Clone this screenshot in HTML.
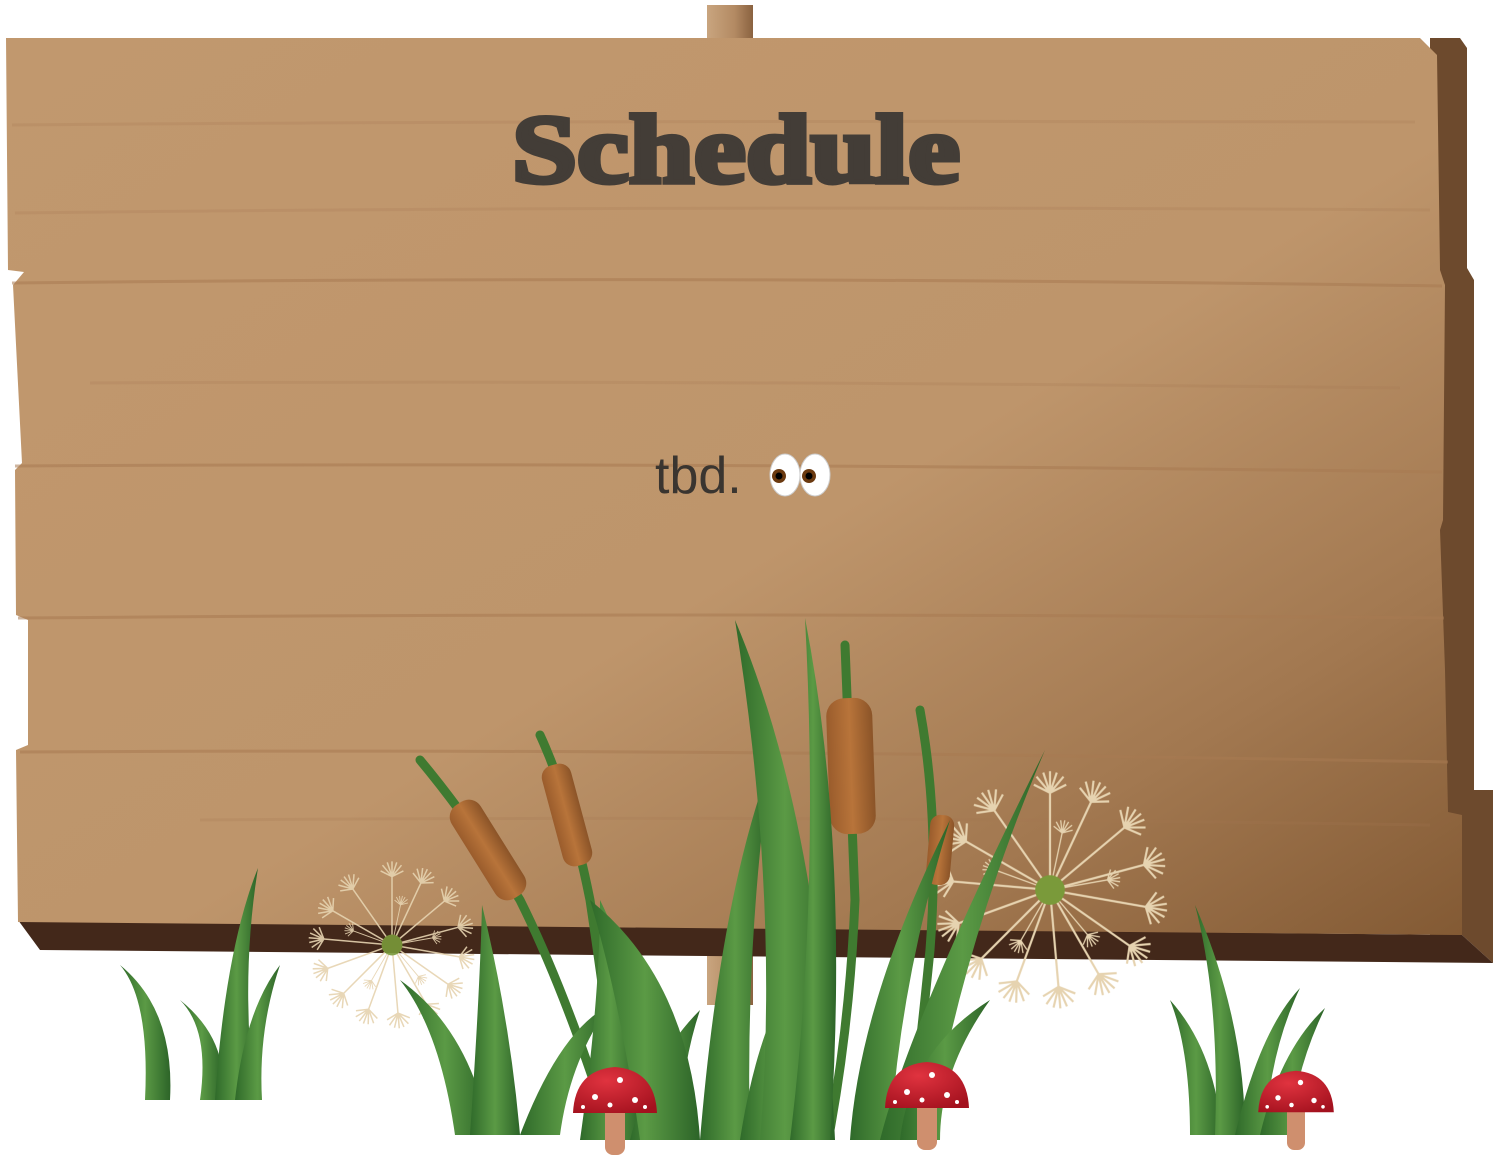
<!DOCTYPE html>
<html><head><meta charset="utf-8"><style>
html,body{margin:0;padding:0;background:#fff;width:1499px;height:1169px;overflow:hidden}
svg{display:block}
</style></head><body>
<svg width="1499" height="1169" viewBox="0 0 1499 1169" xmlns="http://www.w3.org/2000/svg">
<defs>
<linearGradient id="face" x1="0" y1="0" x2="1" y2="1">
<stop offset="0" stop-color="#c1986e"/><stop offset="0.55" stop-color="#be956b"/><stop offset="0.8" stop-color="#a27850"/><stop offset="1" stop-color="#835a34"/>
</linearGradient>
<linearGradient id="post" x1="0" x2="1"><stop offset="0" stop-color="#c9a57f"/><stop offset="0.6" stop-color="#b38a63"/><stop offset="1" stop-color="#8a6240"/></linearGradient>
<linearGradient id="g1" x1="0" x2="1"><stop offset="0" stop-color="#2f6a2a"/><stop offset="0.5" stop-color="#5b9a45"/><stop offset="1" stop-color="#2c6428"/></linearGradient>
<linearGradient id="cat" x1="0" x2="1"><stop offset="0" stop-color="#9a5c2c"/><stop offset="0.5" stop-color="#b8743a"/><stop offset="1" stop-color="#8b5428"/></linearGradient>
<radialGradient id="mush" cx="0.4" cy="0.3" r="0.8"><stop offset="0" stop-color="#e0333f"/><stop offset="1" stop-color="#a3111e"/></radialGradient>
<g id="seed"><line x1="0" y1="0" x2="0" y2="-72"/><path d="M0 -72 L-10 -84 M0 -72 L-5 -87 M0 -72 L0 -88 M0 -72 L5 -87 M0 -72 L10 -84 M0 -72 L-12 -78 M0 -72 L12 -78"/></g>
<g id="dand" stroke="#e6d3b0" stroke-width="1.6" fill="none">
<use href="#seed" transform="rotate(0)"/><use href="#seed" transform="rotate(25)"/><use href="#seed" transform="rotate(50)"/><use href="#seed" transform="rotate(75)"/><use href="#seed" transform="rotate(100)"/><use href="#seed" transform="rotate(125)"/><use href="#seed" transform="rotate(150)"/><use href="#seed" transform="rotate(175)"/><use href="#seed" transform="rotate(200)"/><use href="#seed" transform="rotate(225)"/><use href="#seed" transform="rotate(250)"/><use href="#seed" transform="rotate(275)"/><use href="#seed" transform="rotate(300)"/><use href="#seed" transform="rotate(325)"/>
<use href="#seed" transform="rotate(12) scale(0.6)"/><use href="#seed" transform="rotate(80) scale(0.6)"/><use href="#seed" transform="rotate(140) scale(0.6)"/><use href="#seed" transform="rotate(210) scale(0.6)"/><use href="#seed" transform="rotate(290) scale(0.6)"/>
<circle cx="0" cy="0" r="11" fill="#7a9a3a" stroke="none"/>
</g>
<g id="mr"><rect x="-10" y="0" width="20" height="50" rx="8" fill="#cf8f6e"/><path d="M-42 8 Q-40 -35 0 -38 Q40 -35 42 8 Z" fill="url(#mush)"/><circle cx="-20" cy="-8" r="3" fill="#fff"/><circle cx="5" cy="-25" r="3" fill="#fff"/><circle cx="20" cy="-5" r="3" fill="#fff"/><circle cx="-5" cy="0" r="2.5" fill="#fff"/><circle cx="30" cy="2" r="2" fill="#fff"/><circle cx="-32" cy="2" r="2" fill="#fff"/></g>
</defs>
<rect width="1499" height="1169" fill="#fff"/>
<rect x="707" y="5" width="46" height="1000" fill="url(#post)"/>
<polygon points="1416,38 1460,38 1467,48 1467,268 1474,280 1474,790 1493,790 1493,963 1462,935 1430,935 1430,38" fill="#6d4a2d"/>
<polygon points="18,920 1462,935 1493,963 40,950" fill="#43281a"/>
<polygon points="6,38 1420,38 1437,55 1440,270 1445,285 1443,520 1440,530 1445,670 1448,812 1462,815 1462,935 18,922 16,750 28,745 28,620 16,615 15,470 22,463 13,285 24,272 8,270" fill="url(#face)"/>
<g stroke="#a87a52" stroke-width="3" opacity="0.55" fill="none">
<path d="M12 283 Q700 275 1442 286"/><path d="M15 466 Q700 462 1442 472"/><path d="M18 618 Q700 612 1444 618"/><path d="M20 752 Q700 748 1448 762"/>
<path d="M12 125 Q600 120 1415 122" opacity="0.4"/><path d="M15 213 Q700 205 1430 210" opacity="0.4"/><path d="M90 383 Q700 380 1400 388" opacity="0.4"/><path d="M200 820 Q800 815 1430 825" opacity="0.4"/>
</g>
<text x="512" y="182" textLength="448" lengthAdjust="spacingAndGlyphs" font-family="'Liberation Serif',serif" font-weight="bold" font-size="98" fill="#433d37" stroke="#433d37" stroke-width="5">Schedule</text>
<text x="655" y="493" font-family="'Liberation Sans',sans-serif" font-size="52" fill="#3a3530">tbd.</text>
<g><ellipse cx="785" cy="475" rx="15" ry="21" fill="#fff" stroke="#ccc"/><circle cx="779" cy="476" r="7" fill="#6b3a10"/><circle cx="779" cy="476" r="3.5" fill="#000"/>
<ellipse cx="815" cy="475" rx="15" ry="21" fill="#fff" stroke="#ccc"/><circle cx="809" cy="476" r="7" fill="#6b3a10"/><circle cx="809" cy="476" r="3.5" fill="#000"/></g>
<use href="#dand" transform="translate(392,945) scale(0.95)" opacity="0.9"/>
<use href="#dand" transform="translate(1050,890) scale(1.35)"/>
<g stroke="#3f7a30" stroke-width="9" fill="none" stroke-linecap="round">
<path d="M420 760 Q470 820 520 900 Q560 980 600 1100"/>
<path d="M540 735 Q570 800 590 900 Q605 1000 620 1120"/>
<path d="M845 645 Q850 760 855 900 Q850 1020 830 1130"/>
<path d="M920 710 Q940 820 930 950 Q920 1050 910 1130"/>
</g>
<g fill="url(#cat)">
<rect x="-17" y="-55" width="34" height="110" rx="14" transform="translate(488,850) rotate(-32)"/>
<rect x="-15" y="-52" width="30" height="104" rx="12" transform="translate(567,815) rotate(-15)"/>
<rect x="-23" y="-68" width="46" height="136" rx="18" transform="translate(851,766) rotate(-2)"/>
<rect x="-12" y="-35" width="24" height="70" rx="10" transform="translate(940,850) rotate(5)"/>
</g>
<g fill="url(#g1)">
<path d="M145 1100 Q150 1000 120 965 Q175 1010 170 1100 Z"/>
<path d="M200 1100 Q210 1030 180 1000 Q230 1040 222 1100 Z"/>
<path d="M215 1100 Q225 950 258 868 Q240 980 255 1100 Z"/>
<path d="M235 1100 Q245 1010 280 965 Q258 1030 262 1100 Z"/>
<path d="M455 1135 Q440 1030 400 980 Q470 1030 490 1135 Z"/>
<path d="M470 1135 Q480 990 482 905 Q510 1020 520 1135 Z"/>
<path d="M520 1135 Q560 1030 610 1005 Q570 1060 560 1135 Z"/>
<path d="M580 1140 Q600 1000 600 900 Q650 1000 640 1140 Z"/>
<path d="M630 1140 Q650 1060 700 1010 Q680 1070 680 1140 Z"/>
<path d="M640 1140 Q620 1000 590 900 Q690 980 700 1140 Z"/>
<path d="M700 1140 Q720 900 770 765 Q745 950 750 1140 Z"/>
<path d="M740 1140 Q760 1010 810 950 Q790 1040 790 1140 Z"/>
<path d="M760 1140 Q780 900 735 620 Q820 820 835 1140 Z"/>
<path d="M790 1140 Q820 900 805 618 Q850 850 830 1140 Z"/>
<path d="M850 1140 Q860 1000 950 820 Q900 980 890 1140 Z"/>
<path d="M880 1140 Q910 1020 1045 750 Q960 950 930 1140 Z"/>
<path d="M900 1140 Q910 1050 990 1000 Q940 1070 940 1140 Z"/>
<path d="M1190 1135 Q1190 1050 1170 1000 Q1215 1050 1222 1135 Z"/>
<path d="M1215 1135 Q1220 1000 1195 905 Q1245 1020 1245 1135 Z"/>
<path d="M1235 1135 Q1260 1030 1300 988 Q1270 1050 1265 1135 Z"/>
<path d="M1260 1135 Q1280 1050 1325 1008 Q1295 1070 1290 1135 Z"/>
</g>
<use href="#mr" transform="translate(615,1105)"/>
<use href="#mr" transform="translate(927,1100)"/>
<use href="#mr" transform="translate(1296,1105) scale(0.9)"/>
</svg>
</body></html>
